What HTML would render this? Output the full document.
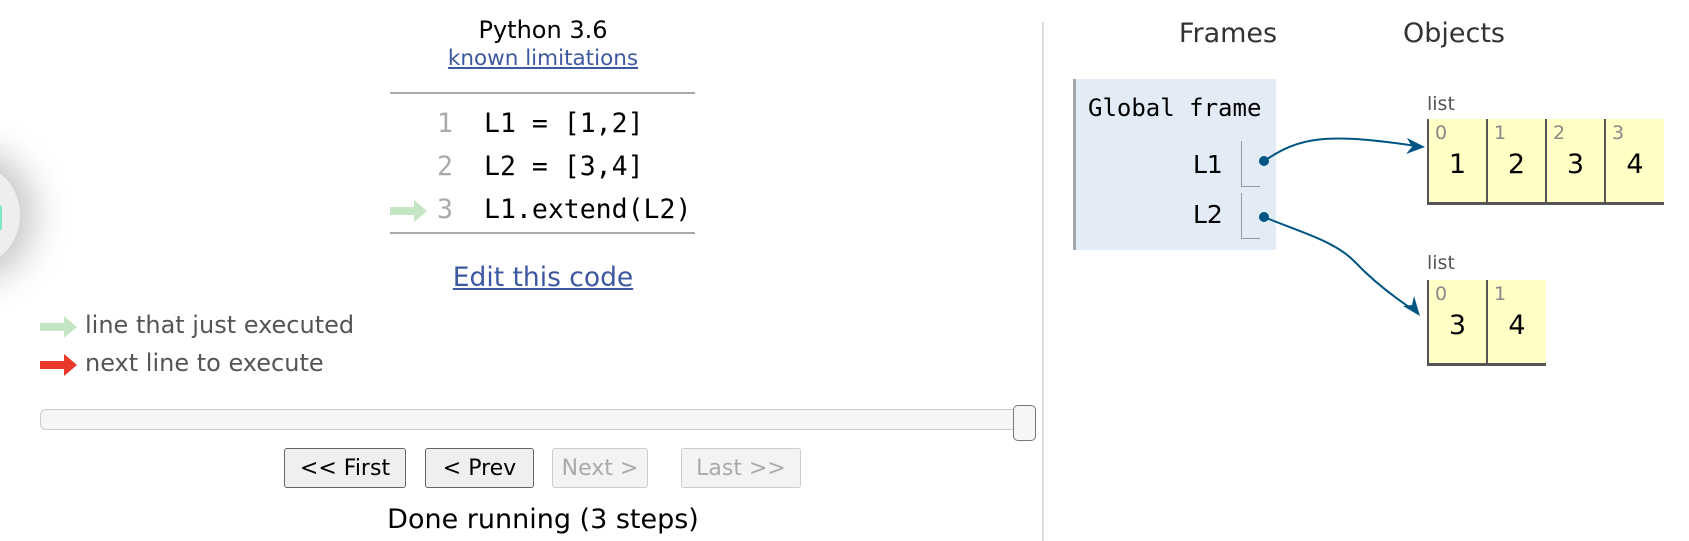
<!DOCTYPE html>
<html><head><meta charset="utf-8"><style>
body{margin:0;width:1689px;height:541px;background:#fff;position:relative;overflow:hidden;font-family:"DejaVu Sans","Liberation Sans",sans-serif;}
.a{position:absolute;white-space:nowrap}
.c{transform:translateX(-50%)}
.mono{font-family:"DejaVu Sans Mono","Liberation Mono",monospace}
a{color:#3d58a2}
.btn{position:absolute;top:448px;height:40px;border:1px solid #666;border-radius:3px;background:#efefef;font-size:22px;line-height:40px;text-align:center;box-sizing:border-box;color:#000}
.dis{border-color:#ccc;color:#aaa;background:#f3f3f3}
.cell{position:absolute;top:0;width:59px;height:86px;border-left:2px solid #555;border-bottom:3px solid #555;background:#ffffc6;box-sizing:border-box}
.cell .i{position:absolute;left:6px;top:3px;font-size:19px;color:#888}
.cell .v{position:absolute;left:0;right:0;top:30px;text-align:center;font-size:27px}
</style></head><body>
<div class="a" style="left:-70px;top:165px;width:90px;height:100px;border-radius:50%;box-shadow:0 0 35px 15px rgba(0,0,0,0.22);background:#eee"></div>
<div class="a" style="left:-4px;top:205px;width:6px;height:26px;background:#7de8c8;border-radius:3px"></div>

<div class="a c" style="left:543px;top:16px;font-size:24px">Python 3.6</div>
<div class="a c" style="left:543px;top:46px;font-size:21.5px"><a href="#">known limitations</a></div>
<div class="a" style="left:390px;top:92px;width:305px;height:2px;background:#aaa"></div>
<div class="a mono" style="left:437px;top:108px;font-size:26.5px;color:#aaa">1</div>
<div class="a mono" style="left:484px;top:108px;font-size:26.5px">L1 = [1,2]</div>
<div class="a mono" style="left:437px;top:151px;font-size:26.5px;color:#aaa">2</div>
<div class="a mono" style="left:484px;top:151px;font-size:26.5px">L2 = [3,4]</div>
<svg class="a" style="left:390px;top:199px" width="38" height="24"><path d="M0 8h24V1l13 11-13 11v-7H0z" fill="#c5e6c5"/></svg>
<div class="a mono" style="left:437px;top:194px;font-size:26.5px;color:#aaa">3</div>
<div class="a mono" style="left:484px;top:194px;font-size:26.5px">L1.extend(L2)</div>
<div class="a" style="left:390px;top:232px;width:305px;height:2px;background:#aaa"></div>
<div class="a c" style="left:543px;top:262px;font-size:26.5px"><a href="#">Edit this code</a></div>

<svg class="a" style="left:40px;top:315px" width="38" height="24"><path d="M0 8h24V1l13 11-13 11v-7H0z" fill="#c5e6c5"/></svg>
<div class="a" style="left:85px;top:311px;font-size:24px;color:#555">line that just executed</div>
<svg class="a" style="left:40px;top:353px" width="38" height="24"><path d="M0 8h24V1l13 11-13 11v-7H0z" fill="#e8392c"/></svg>
<div class="a" style="left:85px;top:349px;font-size:24px;color:#555">next line to execute</div>

<div class="a" style="left:40px;top:409px;width:986px;height:21px;border:1px solid #ccc;border-radius:6px;background:#f6f6f6;box-sizing:border-box"></div>
<div class="a" style="left:1013px;top:405px;width:23px;height:36px;border:1px solid #777;border-radius:5px;background:#f6f6f6;box-sizing:border-box"></div>

<div class="btn" style="left:284px;width:122px">&lt;&lt; First</div>
<div class="btn" style="left:425px;width:109px">&lt; Prev</div>
<div class="btn dis" style="left:552px;width:96px">Next &gt;</div>
<div class="btn dis" style="left:681px;width:120px">Last &gt;&gt;</div>
<div class="a c" style="left:543px;top:504px;font-size:27px">Done running (3 steps)</div>

<div class="a" style="left:1042px;top:22px;width:2px;height:519px;background:#ddd"></div>
<div class="a c" style="left:1228px;top:18px;font-size:27px;color:#333">Frames</div>
<div class="a c" style="left:1454px;top:18px;font-size:27px;color:#333">Objects</div>

<div class="a" style="left:1073px;top:79px;width:203px;height:171px;background:#e2ebf6;border-left:3px solid #a3a8ad;box-sizing:border-box"></div>
<div class="a mono" style="left:1088px;top:94px;font-size:24px">Global frame</div>
<div class="a" style="left:1193px;top:150px;font-size:25px">L1</div>
<div class="a" style="left:1193px;top:200px;font-size:25px">L2</div>
<div class="a" style="left:1241px;top:141px;width:18px;height:45px;border-left:1px solid #999;border-bottom:1px solid #999"></div>
<div class="a" style="left:1241px;top:193px;width:18px;height:45px;border-left:1px solid #999;border-bottom:1px solid #999"></div>

<div class="a" style="left:1427px;top:93px;font-size:19px;color:#555">list</div>
<div class="a" style="left:1427px;top:119px;width:240px;height:88px">
<div class="cell" style="left:0"><span class="i">0</span><div class="v">1</div></div>
<div class="cell" style="left:59px"><span class="i">1</span><div class="v">2</div></div>
<div class="cell" style="left:118px"><span class="i">2</span><div class="v">3</div></div>
<div class="cell" style="left:177px;width:60px"><span class="i">3</span><div class="v">4</div></div>
</div>
<div class="a" style="left:1427px;top:252px;font-size:19px;color:#555">list</div>
<div class="a" style="left:1427px;top:280px;width:120px;height:88px">
<div class="cell" style="left:0"><span class="i">0</span><div class="v">3</div></div>
<div class="cell" style="left:59px;width:60px"><span class="i">1</span><div class="v">4</div></div>
</div>

<svg class="a" style="left:0;top:0" width="1689" height="541">
<circle cx="1264" cy="161" r="5" fill="#005583"/>
<circle cx="1264" cy="217" r="5" fill="#005583"/>
<path d="M1264 161C1300 137 1325 132 1423 147" fill="none" stroke="#005583" stroke-width="2"/>
<path d="M1425 147l-18-9 5 9-6 7z" fill="#005583"/>
<path d="M1264 217C1300 232 1335 241 1355 262S1398 300 1418 313" fill="none" stroke="#005583" stroke-width="2"/>
<path d="M1420 316l-6-20-2 9-9 1z" fill="#005583"/>
</svg>
</body></html>
